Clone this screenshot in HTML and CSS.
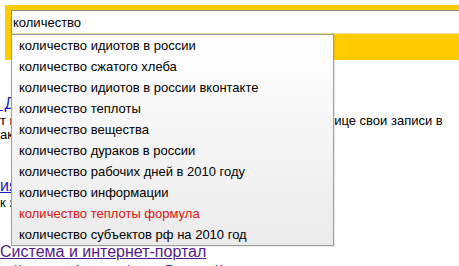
FILE: index.html
```html
<!DOCTYPE html>
<html>
  <head>
    <title>Поиск</title>
    <link rel="stylesheet" href="styles.css">
  </head>
  <body>
    <div class="header">
      <form class="search-bar">
        <input class="query" type="text" value="количество" autocomplete="off"/>
      </form>
    </div>

    <div class="results">
      <div class="result first">
        <a class="title" href="#">&nbsp;Дневники на Я.ру</a>
        <div class="snippet">
          <div class="line"><span class="cut">т имеет возможность размещать на своей стра</span><span>нице свои записи в</span></div>
          <div class="line">ак и в блоге</div>
        </div>
      </div>
      <div class="result second">
        <a class="title" href="#">ия Живого Журнала</a>
        <div class="snippet">
          <div class="line">к записям и комментариям</div>
        </div>
      </div>
      <div class="result third">
        <a class="title visited" href="#">Система и интернет-портал</a>
        <div class="url">· Каталог · Форум · Фото · Видео · Карты</div>
      </div>
    </div>

    <ul class="suggest">
      <li>количество идиотов в россии</li>
      <li>количество сжатого хлеба</li>
      <li>количество идиотов в россии вконтакте</li>
      <li>количество теплоты</li>
      <li>количество вещества</li>
      <li>количество дураков в россии</li>
      <li>количество рабочих дней в 2010 году</li>
      <li>количество информации</li>
      <li class="active">количество теплоты формула</li>
      <li>количество субъектов рф на 2010 год</li>
    </ul>
  </body>
</html>
```

FILE: styles.css
```css
/* Basic styling */
body { margin: 0; font: 13px "Liberation Sans", Arial, sans-serif; color: #000; background: #fff; overflow: hidden; }

.header { padding: 5px 0 0 5px; }
.search-bar { margin: 0 -30px 0 0; padding: 5px 0 26px 6px; background: #fc0; }
.query { display: block; box-sizing: border-box; width: 100%; height: 24px; margin: 0; padding: 0 0 0 1px; border: 1px solid #8a8a70; border-bottom-color: #e8dc9a; font: 13px "Liberation Sans", Arial, sans-serif; color: #000; outline: none; }

.results { margin-top: 34px; }
.title { display: block; font-size: 16px; line-height: 20px; color: #1a1acc; white-space: nowrap; }
.title.visited { color: #551a8b; }
.snippet .line { line-height: 14px; white-space: nowrap; }
.cut { display: inline-block; width: 327px; overflow: hidden; vertical-align: top; }
.second { margin-top: 34px; }
.third { margin-top: 32px; }
.url { padding-left: 6px; margin-top: 1px; line-height: 14px; color: #1a1acc; white-space: nowrap; }

.suggest { position: absolute; left: 11px; top: 34px; box-sizing: border-box; width: 323px; height: 212px; margin: 0; padding: 0; list-style: none; border: 1px solid #9c9c9c; background: linear-gradient(#fff, #ebebeb); box-shadow: 1px 1px 1px rgba(0, 0, 0, .08); }
.suggest li { height: 21px; line-height: 21px; padding-left: 7px; white-space: nowrap; }
.suggest li.active { color: #e31010; }
```
